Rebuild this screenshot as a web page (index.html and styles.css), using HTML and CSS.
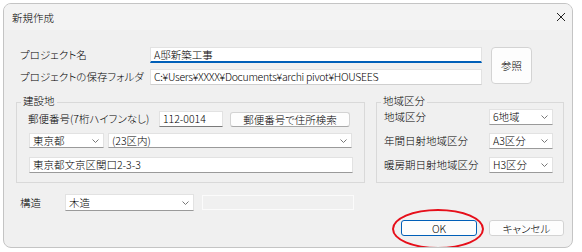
FILE: index.html
```html
<!DOCTYPE html>
<html lang="ja">
<head>
    <meta charset="UTF-8">
    <title>新規作成</title>
    <link rel="stylesheet" href="styles.css">
</head>
<body>
    <div class="window">
        <div class="titlebar">
            <span class="title">新規作成</span>
            <svg class="close" width="10" height="10" viewBox="0 0 10 10">
                <path d="M1 1 L9 9 M9 1 L1 9" stroke="#222" stroke-width="1" fill="none"/>
            </svg>
        </div>

        <div class="content">
            <div class="project">
                <label class="label">プロジェクト名</label>
                <div class="field field-active">A邸新築工事</div>
                <button class="btn btn-browse">参照</button>
                <label class="label">プロジェクトの保存フォルダ</label>
                <div class="field field-soft">C:¥Users¥XXXX¥Documents¥archi pivot¥HOUSEES</div>
            </div>

            <div class="groups">
                <fieldset class="group group-site">
                    <legend>建設地</legend>
                    <div class="site-body">
                        <div class="postal-row">
                            <label class="postal-label">郵便番号(7桁ハイフンなし)</label>
                            <div class="field postal-field">112-0014</div>
                            <button class="btn btn-search">郵便番号で住所検索</button>
                        </div>
                        <div class="pref-row">
                            <div class="field select pref-select">
                                <span>東京都</span>
                                <svg class="chevron" width="7" height="4" viewBox="0 0 7 4"><polyline points="0.5,0.5 3.5,3.5 6.5,0.5" fill="none" stroke="#777" stroke-width="1"/></svg>
                            </div>
                            <div class="field select city-select">
                                <span>(23区内)</span>
                                <svg class="chevron" width="7" height="4" viewBox="0 0 7 4"><polyline points="0.5,0.5 3.5,3.5 6.5,0.5" fill="none" stroke="#777" stroke-width="1"/></svg>
                            </div>
                        </div>
                        <div class="field address-field">東京都文京区関口2-3-3</div>
                    </div>
                </fieldset>

                <fieldset class="group group-region">
                    <legend>地域区分</legend>
                    <div class="region-body">
                        <div class="region-row">
                            <label class="region-label">地域区分</label>
                            <div class="field select region-select">
                                <span>6地域</span>
                                <svg class="chevron" width="7" height="4" viewBox="0 0 7 4"><polyline points="0.5,0.5 3.5,3.5 6.5,0.5" fill="none" stroke="#777" stroke-width="1"/></svg>
                            </div>
                        </div>
                        <div class="region-row">
                            <label class="region-label">年間日射地域区分</label>
                            <div class="field select region-select">
                                <span>A3区分</span>
                                <svg class="chevron" width="7" height="4" viewBox="0 0 7 4"><polyline points="0.5,0.5 3.5,3.5 6.5,0.5" fill="none" stroke="#777" stroke-width="1"/></svg>
                            </div>
                        </div>
                        <div class="region-row">
                            <label class="region-label">暖房期日射地域区分</label>
                            <div class="field select region-select">
                                <span>H3区分</span>
                                <svg class="chevron" width="7" height="4" viewBox="0 0 7 4"><polyline points="0.5,0.5 3.5,3.5 6.5,0.5" fill="none" stroke="#777" stroke-width="1"/></svg>
                            </div>
                        </div>
                    </div>
                </fieldset>
            </div>

            <div class="structure-row">
                <label class="structure-label">構造</label>
                <div class="field select structure-select">
                    <span>木造</span>
                    <svg class="chevron" width="7" height="4" viewBox="0 0 7 4"><polyline points="0.5,0.5 3.5,3.5 6.5,0.5" fill="none" stroke="#777" stroke-width="1"/></svg>
                </div>
                <div class="disabled-field"></div>
            </div>

            <div class="actions">
                <button class="btn btn-ok">OK</button>
                <button class="btn btn-cancel">キャンセル</button>
            </div>
        </div>

        <!-- red annotation circle around OK -->
        <div class="annotation"></div>
    </div>
</body>
</html>
```

FILE: styles.css
```css
body {
    margin: 0;
    padding: 3px;
    background-color: #fff;
    font-family: "Noto Sans CJK JP", "Noto Sans", sans-serif;
    font-size: 10.5px;
    font-weight: 300;
    font-feature-settings: "palt";
    color: #000;
}

.window {
    position: relative;
    width: 570px;
    height: 245px;
    box-sizing: border-box;
    border: 1px solid #c4c4c4;
    border-radius: 8px;
    background-color: #f0f0f0;
    overflow: hidden;
    display: flex;
    flex-direction: column;
}

.titlebar {
    height: 26px;
    background-color: #f3f3f3;
    display: flex;
    align-items: center;
    justify-content: space-between;
    padding: 0 6px 0 8px;
}

.content {
    padding: 17px 8px 0 12px;
}

.label,
.postal-label,
.region-label,
.structure-label {
    white-space: nowrap;
    line-height: 14px;
}

/* generic field */
.field {
    height: 16px;
    box-sizing: border-box;
    background-color: #fff;
    border: 1px solid #e2e2e2;
    border-bottom-color: #9a9a9a;
    padding: 0 3px;
    display: flex;
    align-items: center;
    white-space: nowrap;
    overflow: hidden;
    line-height: 14px;
}

.field-active {
    border-bottom: 2px solid #005fb8;
}

.field-soft {
    border-bottom-color: #cfcfcf;
    letter-spacing: -0.3px;
}

.select {
    justify-content: space-between;
    padding: 0 4px 0 3px;
}

.chevron {
    flex-shrink: 0;
}

.btn {
    font: inherit;
    font-feature-settings: "palt";
    color: #000;
    background-color: #fdfdfd;
    border: 1px solid #d3d3d3;
    border-radius: 3px;
    padding: 0;
    box-sizing: border-box;
    line-height: 13px;
}

/* project rows */
.project {
    display: grid;
    grid-template-columns: 121px 332px 41px;
    grid-template-rows: 16px 16px;
    column-gap: 9px;
    row-gap: 6px;
    align-items: center;
    padding-left: 4px;
}

.btn-browse {
    grid-column: 3;
    grid-row: 1 / 3;
    align-self: start;
    height: 37px;
    border-radius: 4px;
}

/* group boxes */
.groups {
    display: flex;
    gap: 11px;
    margin-top: 10px;
}

.group {
    margin: 0;
    padding: 0;
    min-width: 0;
    border: 1px solid #d9d9d9;
    box-sizing: border-box;
}

.group legend {
    margin-left: 4px;
    padding: 0 2px 3px;
    line-height: 12px;
}

.group-site {
    width: 349px;
}

.group-region {
    width: 188px;
}

.site-body {
    padding: 1px 11px 9px 12px;
}

.postal-row {
    display: flex;
    align-items: center;
    height: 16px;
}

.postal-label {
    width: 131px;
    margin-left: -1px;
}

.postal-field {
    width: 64px;
    border-bottom-color: #7a7a7a;
}

.btn-search {
    width: 120px;
    height: 15px;
    margin-left: 7px;
    border-bottom-color: #a8a8a8;
}

.pref-row {
    display: flex;
    gap: 4px;
    margin-top: 6px;
}

.pref-select {
    width: 75px;
    height: 15px;
}

.city-select {
    width: 244px;
    height: 15px;
}

.address-field {
    margin-top: 9px;
}

.region-body {
    margin-top: -1px;
    padding: 0 10px 0 7px;
    display: flex;
    flex-direction: column;
    gap: 8px;
}

.region-row {
    display: flex;
    align-items: center;
}

.region-label {
    width: 105px;
}

.region-select {
    width: 64px;
}

/* structure */
.structure-row {
    display: flex;
    align-items: center;
    margin-top: 11px;
    padding-left: 4px;
    height: 17px;
}

.structure-label {
    width: 45px;
}

.structure-select {
    width: 129px;
    height: 17px;
}

.disabled-field {
    width: 152px;
    height: 15px;
    box-sizing: border-box;
    margin-left: 8px;
    border: 1px solid #fbfbfb;
}

/* dialog buttons */
.actions {
    display: flex;
    justify-content: flex-end;
    gap: 12px;
    margin-top: 9px;
}

.btn-ok {
    width: 76px;
    height: 16px;
    border-color: #005fb8;
}

.btn-cancel {
    width: 75px;
    height: 16px;
}

.annotation {
    position: absolute;
    left: 388px;
    top: 205px;
    width: 92px;
    height: 40px;
    box-sizing: border-box;
    border: 2.5px solid #e60f1a;
    border-radius: 50%;
}
```
